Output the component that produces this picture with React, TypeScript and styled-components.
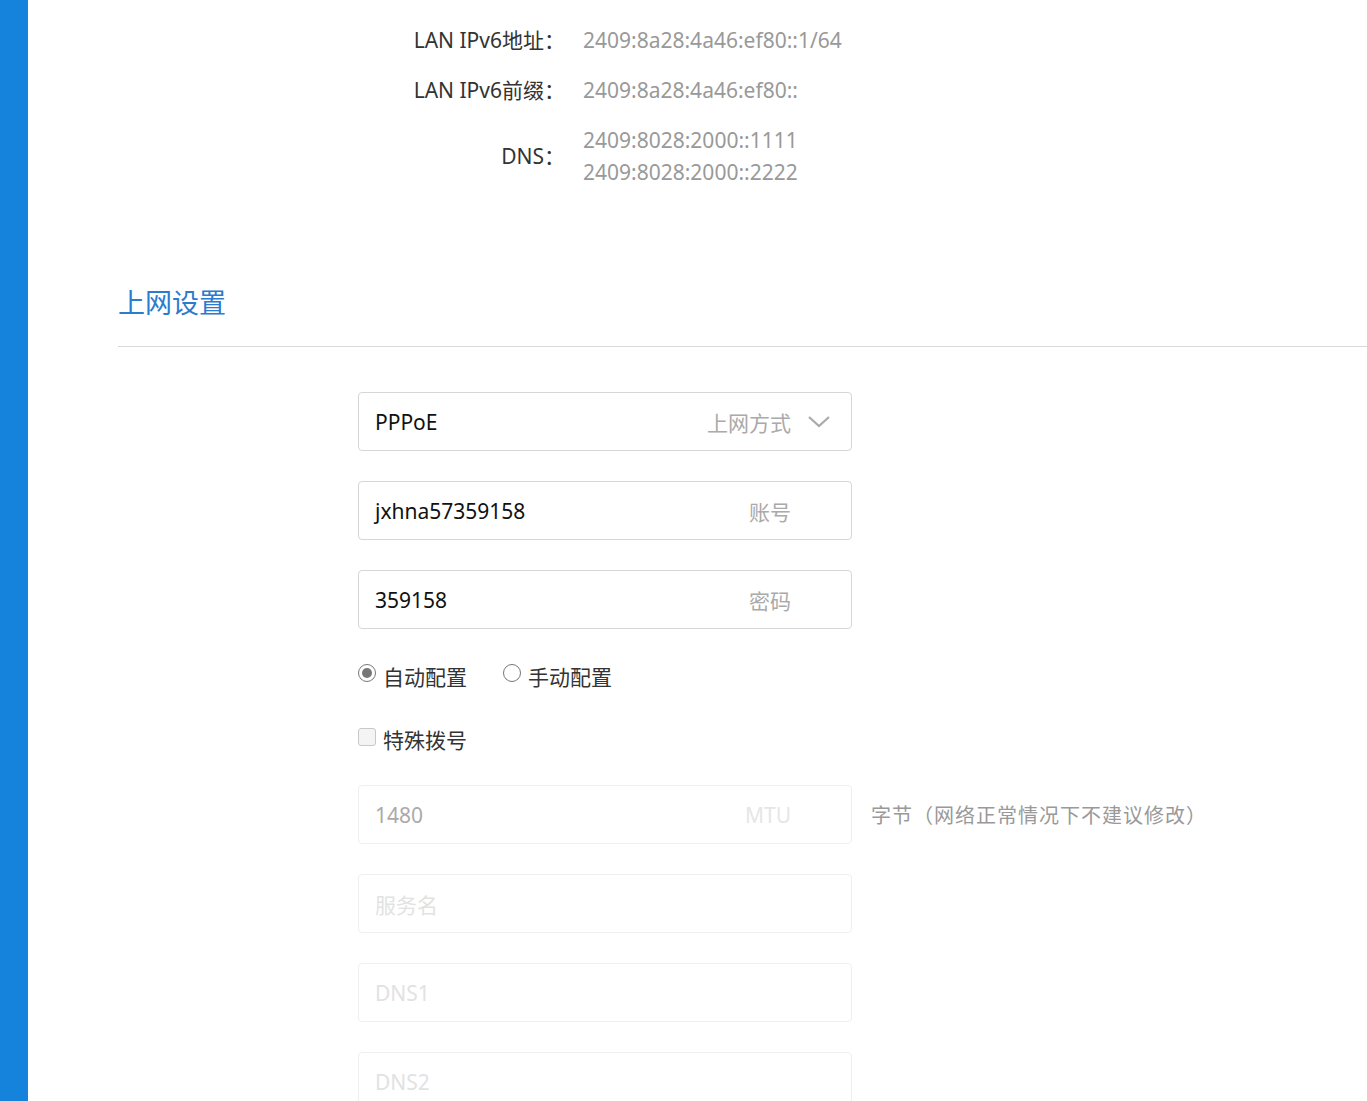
import React from "react";
import styled, { createGlobalStyle } from "styled-components";

const Global = createGlobalStyle`
  html, body { margin: 0; padding: 0; background: #fff; }
  body { font-family: "Noto Sans", "Noto Sans CJK SC", sans-serif; }
  * { box-sizing: border-box; }
`;

const Page = styled.div`
  display: flex;
  min-height: 100vh;
  height: 1101px;
  overflow: hidden;
`;

const Sidebar = styled.div`
  width: 28px;
  flex: 0 0 28px;
  background: #1582dc;
`;

const Main = styled.div`
  flex: 1;
  padding-left: 90px;
`;

const InfoGrid = styled.div`
  display: grid;
  grid-template-columns: 210px auto;
  column-gap: 18px;
  row-gap: 18px;
  padding-top: 24px;
  margin-left: 237px;
  font-size: 21px;
  line-height: 32px;
`;

const InfoLabel = styled.div`
  text-align: right;
  color: #333;
  align-self: center;
`;

const InfoValue = styled.div`
  color: #999;
`;

const SectionHeader = styled.h2`
  margin: 95px 0 0;
  padding-bottom: 23px;
  font-size: 27px;
  line-height: 40px;
  font-weight: 400;
  color: #2b7bce;
  border-bottom: 1px solid #d9d9d9;
`;

const Form = styled.div`
  display: flex;
  flex-direction: column;
  gap: 30px;
  margin-left: 240px;
  padding-top: 45px;
`;

const FieldRow = styled.div`
  display: flex;
  align-items: center;
  gap: 19px;
`;

const Field = styled.div<{ $disabled?: boolean; $select?: boolean }>`
  width: 494px;
  height: 59px;
  display: flex;
  align-items: center;
  padding: 0 ${(p) => (p.$select ? "20px" : "60px")} 0 16px;
  border: 1px solid ${(p) => (p.$disabled ? "#efefef" : "#d6d6d6")};
  border-radius: 4px;
  font-size: 21px;
  background: #fff;
`;

const Value = styled.span<{ $disabled?: boolean; $placeholder?: boolean }>`
  flex: 1;
  color: ${(p) => (p.$placeholder ? "#e2e2e2" : p.$disabled ? "#aaa" : "#111")};
`;

const Suffix = styled.span<{ $disabled?: boolean }>`
  color: ${(p) => (p.$disabled ? "#e6e6e6" : "#aaa")};
`;

const Chevron = styled.svg`
  margin-left: 16px;
  width: 24px;
  height: 14px;
`;

const Hint = styled.span`
  font-size: 20px;
  letter-spacing: 1px;
  color: #999;
`;

const OptionRow = styled.div`
  display: flex;
  align-items: center;
  gap: 36px;
  height: 33px;
  font-size: 21px;
  color: #333;
`;

const Option = styled.label`
  display: flex;
  align-items: center;
  gap: 7px;
`;

const RadioMark = styled.span<{ $checked?: boolean }>`
  width: 18px;
  height: 18px;
  border-radius: 50%;
  border: 1.5px solid #777;
  display: inline-flex;
  align-items: center;
  justify-content: center;
  margin-top: -6px;
  &::after {
    content: "";
    width: 10px;
    height: 10px;
    border-radius: 50%;
    background: ${(p) => (p.$checked ? "#777" : "transparent")};
  }
`;

const CheckMark = styled.span`
  width: 18px;
  height: 18px;
  border-radius: 3px;
  border: 1px solid #c8c8c8;
  background: #f4f4f4;
  margin-top: -3px;
`;

export default function App() {
  return (
    <>
      <Global />
      <Page>
        <Sidebar />
        <Main>
          <InfoGrid>
            <InfoLabel>LAN IPv6地址：</InfoLabel>
            <InfoValue>2409:8a28:4a46:ef80::1/64</InfoValue>
            <InfoLabel>LAN IPv6前缀：</InfoLabel>
            <InfoValue>2409:8a28:4a46:ef80::</InfoValue>
            <InfoLabel>DNS：</InfoLabel>
            <InfoValue>
              2409:8028:2000::1111
              <br />
              2409:8028:2000::2222
            </InfoValue>
          </InfoGrid>
          <SectionHeader>上网设置</SectionHeader>
          <Form>
            <Field $select>
              <Value>PPPoE</Value>
              <Suffix>上网方式</Suffix>
              <Chevron viewBox="0 0 24 14">
                <path d="M2 2 L12 11 L22 2" fill="none" stroke="#aaa" strokeWidth="2.2" />
              </Chevron>
            </Field>
            <Field>
              <Value>jxhna57359158</Value>
              <Suffix>账号</Suffix>
            </Field>
            <Field>
              <Value>359158</Value>
              <Suffix>密码</Suffix>
            </Field>
            <OptionRow>
              <Option>
                <RadioMark $checked />
                自动配置
              </Option>
              <Option>
                <RadioMark />
                手动配置
              </Option>
            </OptionRow>
            <OptionRow>
              <Option>
                <CheckMark />
                特殊拨号
              </Option>
            </OptionRow>
            <FieldRow>
              <Field $disabled>
                <Value $disabled>1480</Value>
                <Suffix $disabled>MTU</Suffix>
              </Field>
              <Hint>字节（网络正常情况下不建议修改）</Hint>
            </FieldRow>
            <Field $disabled>
              <Value $placeholder>服务名</Value>
            </Field>
            <Field $disabled>
              <Value $placeholder>DNS1</Value>
            </Field>
            <Field $disabled>
              <Value $placeholder>DNS2</Value>
            </Field>
          </Form>
        </Main>
      </Page>
    </>
  );
}
